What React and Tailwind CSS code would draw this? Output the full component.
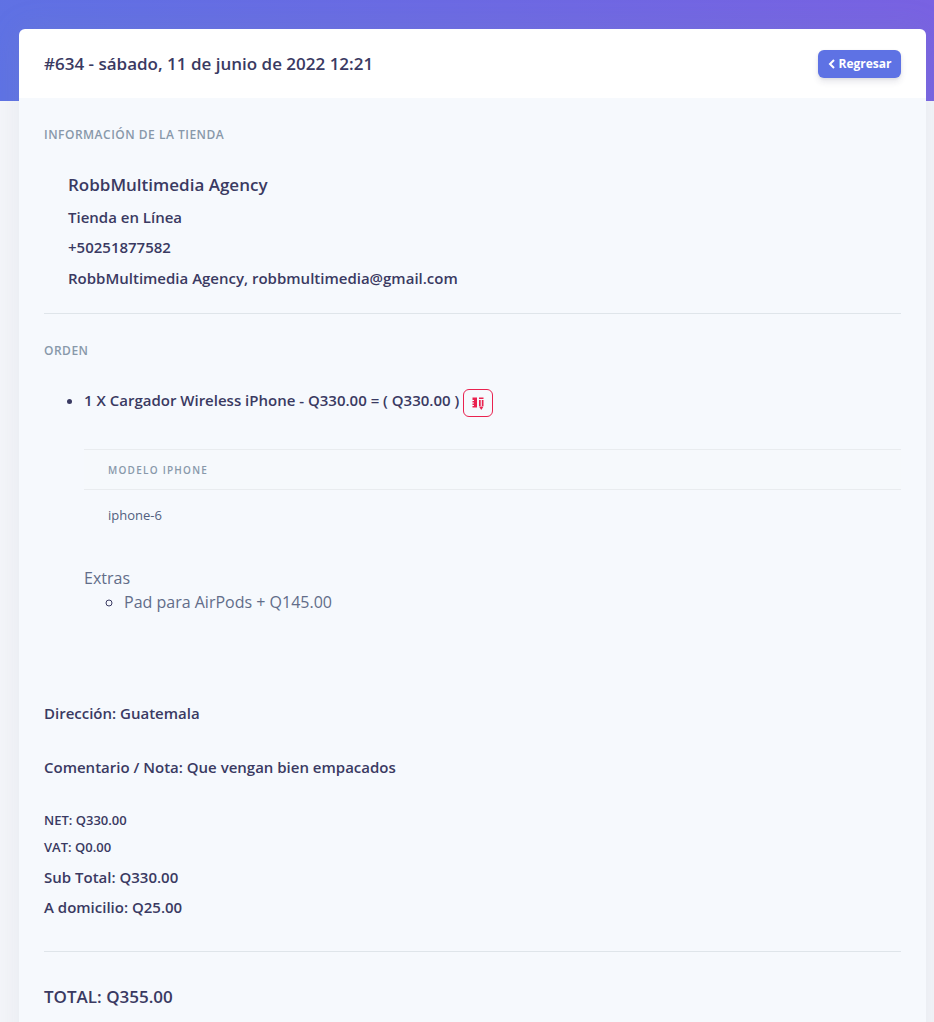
import React from 'react';

const RulerPencilIcon = () => (
    <svg width="12" height="13" viewBox="0 0 12 13" fill="#e9224f">
        <path d="M0.5 0.5h4.5v10h-4.5v-1.5h1.5v-1h-1.5v-1.5h1.5v-1h-1.5v-1.5h1.5v-1h-1.5z" />
        <path d="M7 0.5h4.5v1.5h-4.5z" />
        <path d="M7 3h1.7v6h-1.7z" />
        <path d="M9.8 3h1.7v6h-1.7z" />
        <path d="M7 9.5h4.5l-2.25 3.5z" />
    </svg>
);

const Label = ({ children, className = '' }) => (
    <h6 className={`text-[12px] leading-[14px] font-semibold uppercase tracking-[0.5px] text-[#8898aa] ${className}`}>{children}</h6>
);

const App = () => {
    return (
        <div className="relative h-screen overflow-hidden bg-[#f5f6fa] font-['Open_Sans',sans-serif] text-[#3a3a62]">
            {/* cabecera con gradiente */}
            <div className="absolute inset-x-0 top-0 h-[101px] bg-[linear-gradient(65deg,#5e72e4_0%,#7962e2_100%)]"></div>

            <div className="relative pl-[19px] pr-[8px] pt-[29px]">
                <div className="rounded-md bg-white shadow-[0_0_32px_rgba(136,152,170,0.15)]">
                    <div className="flex h-[69px] items-center justify-between px-[25px]">
                        <h3 className="text-[17px] font-semibold">#634 - sábado, 11 de junio de 2022 12:21</h3>
                        <button className="flex h-[28px] w-[83px] items-center justify-center gap-[3px] rounded-md bg-[#5e72e4] text-[12px] font-bold text-white shadow-[0_4px_6px_rgba(50,50,93,0.11),0_1px_3px_rgba(0,0,0,0.08)]">
                            <svg width="8" height="10" viewBox="0 0 8 10" fill="none" stroke="currentColor" strokeWidth="2">
                                <path d="M6 1L2 5l4 4" />
                            </svg>
                            Regresar
                        </button>
                    </div>

                    <div className="rounded-b-md bg-[#f6f9fd] px-[25px] pt-[30px] pb-[60px]">
                        <Label>Información de la tienda</Label>

                        <div className="mt-[31px] pl-[24px] font-semibold">
                            <p className="text-[17px] leading-[24px]">RobbMultimedia Agency</p>
                            <p className="mt-[9px] text-[15px] leading-[22px]">Tienda en Línea</p>
                            <p className="mt-[8px] text-[15px] leading-[22px]">+50251877582</p>
                            <p className="mt-[9px] text-[15px] leading-[22px]">RobbMultimedia Agency, robbmultimedia@gmail.com</p>
                        </div>

                        <hr className="mt-[24px] border-[#dfe5ea]" />

                        <Label className="mt-[30px]">Orden</Label>

                        <ul className="mt-[31px] list-disc pl-[40px]">
                            <li className="text-[15px] leading-[22px] font-semibold marker:text-[#3a3a62]">
                                <div className="flex h-[28px] items-start">
                                    <span>1 X Cargador Wireless iPhone - Q330.00 = ( Q330.00 )</span>
                                    <span className="ml-[4px] flex h-[28px] w-[30px] items-center justify-center rounded-md border border-[#e9224f]">
                                        <RulerPencilIcon />
                                    </span>
                                </div>
                                <div className="mt-[32px]">
                                    <div className="flex h-[41px] items-center border-y border-[#e9ecef] bg-[#f6f9fc] px-[24px] text-[10px] font-semibold tracking-[1.25px] text-[#8898aa] uppercase">
                                        Modelo iPhone
                                    </div>
                                    <div className="mt-[15px] px-[24px] text-[13px] leading-[20px] font-normal text-[#525f7f]">iphone-6</div>
                                </div>
                                <div className="mt-[41px] text-[16px] leading-[24px] font-normal text-[#626d89]">
                                    Extras
                                    <ul className="list-[circle] pl-[40px]">
                                        <li>Pad para AirPods + Q145.00</li>
                                    </ul>
                                </div>
                            </li>
                        </ul>

                        <div className="font-semibold">
                            <p className="mt-[88px] text-[15px] leading-[22px]">Dirección: Guatemala</p>
                            <p className="mt-[32px] text-[15px] leading-[22px]">Comentario / Nota: Que vengan bien empacados</p>
                            <p className="mt-[32px] text-[13px] leading-[20px]">NET: Q330.00</p>
                            <p className="mt-[7px] text-[13px] leading-[20px]">VAT: Q0.00</p>
                            <p className="mt-[9px] text-[15px] leading-[22px]">Sub Total: Q330.00</p>
                            <p className="mt-[8px] text-[15px] leading-[22px]">A domicilio: Q25.00</p>
                        </div>

                        <hr className="mt-[33px] border-[#dfe5ea]" />

                        <p className="mt-[32px] text-[17px] leading-[26px] font-semibold">TOTAL: Q355.00</p>
                    </div>
                </div>
            </div>
        </div>
    );
};

export default App;
